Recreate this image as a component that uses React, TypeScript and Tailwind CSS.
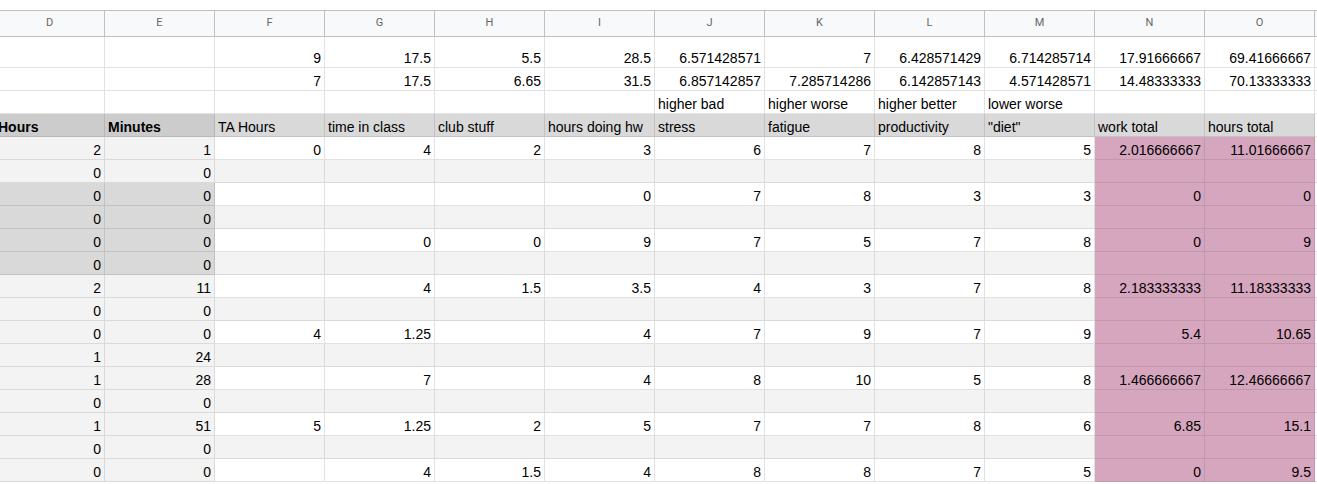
import React from 'react'

type Val = string | number | null

const cols = ['D', 'E', 'F', 'G', 'H', 'I', 'J', 'K', 'L', 'M', 'N', 'O']

// top rows: D..O
const topRows: Val[][] = [
  [null, null, 9, 17.5, 5.5, 28.5, '6.571428571', 7, '6.428571429', '6.714285714', '17.91666667', '69.41666667'],
  [null, null, 7, 17.5, 6.65, 31.5, '6.857142857', '7.285714286', '6.142857143', '4.571428571', '14.48333333', '70.13333333'],
]

const notes: Val[] = [null, null, null, null, null, null, 'higher bad', 'higher worse', 'higher better', 'lower worse', null, null]

const headers = ['Hours', 'Minutes', 'TA Hours', 'time in class', 'club stuff', 'hours doing hw', 'stress', 'fatigue', 'productivity', '"diet"', 'work total', 'hours total']

interface DataRow {
  v: Val[]
  dark?: boolean
}

const E: Val[] = [null, null, null, null, null, null, null, null, null, null]

const dataRows: DataRow[] = [
  { v: [2, 1, 0, 4, 2, 3, 6, 7, 8, 5, '2.016666667', '11.01666667'] },
  { v: [0, 0, ...E] },
  { v: [0, 0, null, null, null, 0, 7, 8, 3, 3, 0, 0], dark: true },
  { v: [0, 0, ...E], dark: true },
  { v: [0, 0, null, 0, 0, 9, 7, 5, 7, 8, 0, 9], dark: true },
  { v: [0, 0, ...E], dark: true },
  { v: [2, 11, null, 4, 1.5, 3.5, 4, 3, 7, 8, '2.183333333', '11.18333333'] },
  { v: [0, 0, ...E] },
  { v: [0, 0, 4, 1.25, null, 4, 7, 9, 7, 9, 5.4, 10.65] },
  { v: [1, 24, ...E] },
  { v: [1, 28, null, 7, null, 4, 8, 10, 5, 8, '1.466666667', '12.46666667'] },
  { v: [0, 0, ...E] },
  { v: [1, 51, 5, 1.25, 2, 5, 7, 7, 8, 6, 6.85, 15.1] },
  { v: [0, 0, ...E] },
  { v: [0, 0, null, 4, 1.5, 4, 8, 8, 7, 5, 0, 9.5] },
]

const tone = {
  white: 'bg-white border-[#e2e2e2]',
  light: 'bg-[#f3f3f3] border-[#dadada]',
  dark: 'bg-[#d9d9d9] border-[#c2c2c2]',
  darker: 'bg-[#cccccc] border-[#b8b8b8]',
  pink: 'bg-[#d5a6bd] border-[#c098ab]',
}

function Cell({ value, className, left, bold }: { value: Val; className: string; left?: boolean; bold?: boolean }) {
  return (
    <div
      className={`w-[110px] shrink-0 h-full border-r border-b flex items-end pb-[1px] overflow-hidden whitespace-nowrap ${
        left ? 'justify-start pl-[3px]' : 'justify-end pr-[3px]'
      } ${bold ? 'font-bold' : ''} ${className}`}
    >
      <span className="leading-[16px]">{value ?? ''}</span>
    </div>
  )
}

export default function App() {
  return (
    <div className="w-[1317px] h-[484px] overflow-hidden bg-white pt-[10px] font-['Liberation_Sans',Arial,sans-serif] text-[14px] text-black">
      <div className="-ml-[5px]">
        {/* column letters */}
        <div className="flex h-[27px] border-t border-[#c0c0c0] bg-[#f8f9fa]">
          {cols.map((c) => (
            <div
              key={c}
              className="w-[110px] shrink-0 h-full border-r border-b border-[#c0c0c0] flex items-center justify-center font-['Roboto',Arial,sans-serif] text-[11px] text-[#666]"
            >
              {c}
            </div>
          ))}
          <div className="w-[20px] shrink-0 h-full border-b border-[#c0c0c0]" />
        </div>

        {topRows.map((row, i) => (
          <div key={i} className={`flex ${i === 0 ? 'h-[31px]' : 'h-[23px]'}`}>
            {row.map((v, j) => (
              <Cell key={j} value={v} className={tone.white} />
            ))}
            <Cell value={null} className={tone.white} />
          </div>
        ))}

        <div className="flex h-[23px]">
          {notes.map((v, j) => (
            <Cell key={j} value={v} left className={tone.white} />
          ))}
          <Cell value={null} className={tone.white} />
        </div>

        <div className="flex h-[23px]">
          {headers.map((h, j) => (
            <Cell key={j} value={h} left bold={j < 2} className={j < 2 ? tone.darker : tone.dark} />
          ))}
          <Cell value={null} className={tone.white} />
        </div>

        {dataRows.map((row, i) => {
          const odd = i % 2 === 1
          return (
            <div key={i} className="flex h-[23px]">
              {row.v.map((v, j) => {
                let cls = odd ? tone.light : tone.white
                if (j < 2) cls = row.dark ? tone.dark : tone.light
                if (j >= 10) cls = tone.pink
                return <Cell key={j} value={v} className={cls} />
              })}
              <Cell value={null} className={odd ? tone.light : tone.white} />
            </div>
          )
        })}
      </div>
    </div>
  )
}
